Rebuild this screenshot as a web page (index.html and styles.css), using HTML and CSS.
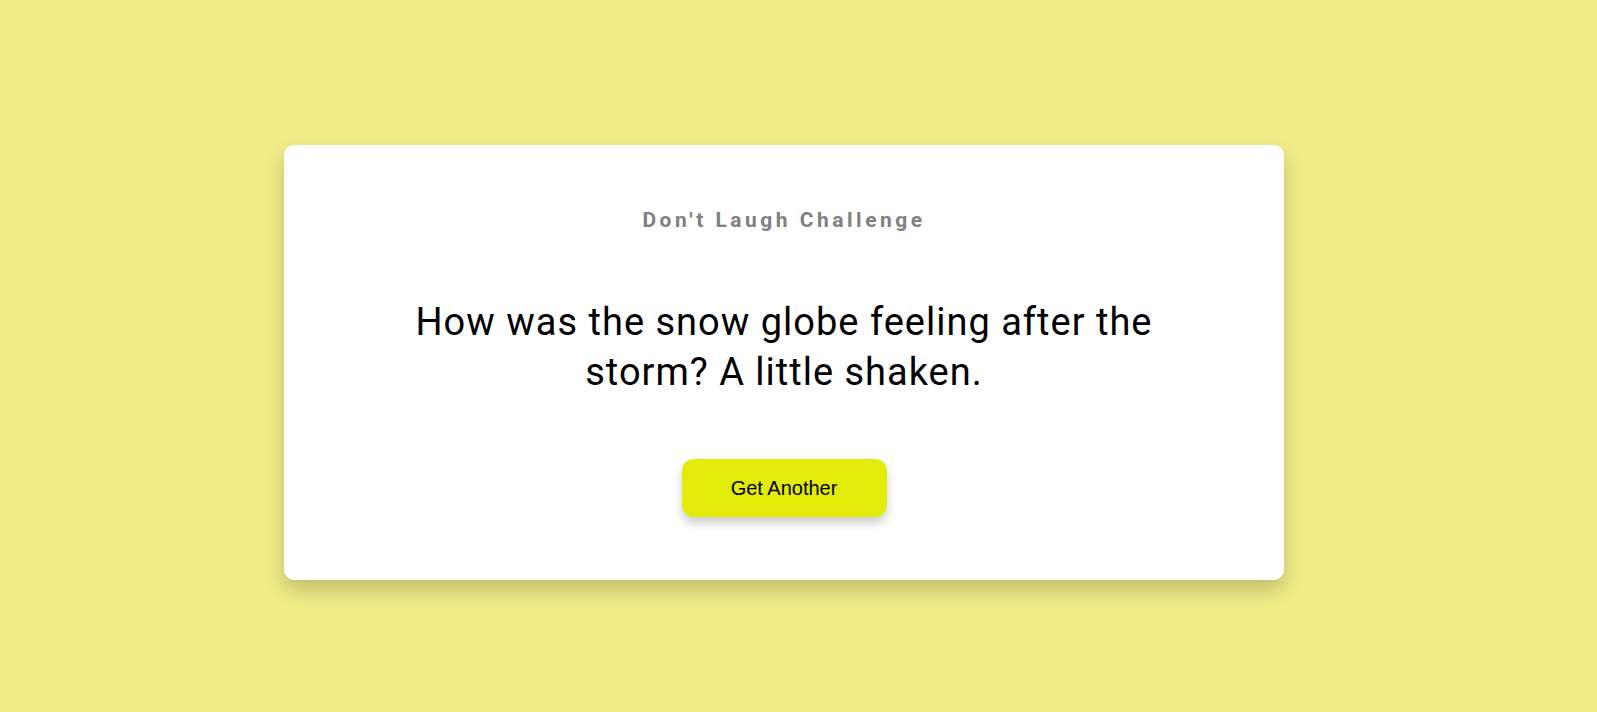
FILE: index.html
```html
<!DOCTYPE html>
<html lang="en">
<head>
<meta charset="utf-8">
<title>Don't Laugh Challenge</title>
<link rel="stylesheet" href="styles.css">
</head>
<body>
<main class="page">
  <section class="card">
    <h3 class="title">Don't Laugh Challenge</h3>
    <p class="joke">How was the snow globe feeling after the storm? A little shaken.</p>
    <button class="btn" type="button">Get Another</button>
  </section>
</main>
</body>
</html>
```
FILE: styles.css
```css
html, body {
  margin: 0;
  padding: 0;
}
body {
  background: #f0ed88;
  font-family: Roboto, "Liberation Sans", sans-serif;
  min-height: 712px;
}
.page {
  padding-top: 145px;
  padding-left: 284px;
}
.card {
  box-sizing: border-box;
  width: 1000px;
  height: 435px;
  background: #ffffff;
  border-radius: 10px;
  box-shadow: 0 10px 20px rgba(0, 0, 0, 0.2);
  display: flex;
  flex-direction: column;
  align-items: center;
  padding: 60px 0 0;
  text-align: center;
}
.title {
  margin: 0;
  font-size: 21px;
  font-weight: 700;
  color: #808080;
  letter-spacing: 3.5px;
  line-height: 30px;
}
.joke {
  margin: 62px 0 0;
  font-size: 38px;
  line-height: 50px;
  color: #000;
  letter-spacing: 1px;
  max-width: 760px;
}
.btn {
  margin-top: 62px;
  width: 205px;
  height: 58px;
  border: none;
  border-radius: 12px;
  background: #e3eb0b;
  color: #000;
  font-family: "Liberation Sans", Arial, sans-serif;
  font-size: 20px;
  box-shadow: 0 6px 10px rgba(0, 0, 0, 0.2);
  cursor: pointer;
}
```
